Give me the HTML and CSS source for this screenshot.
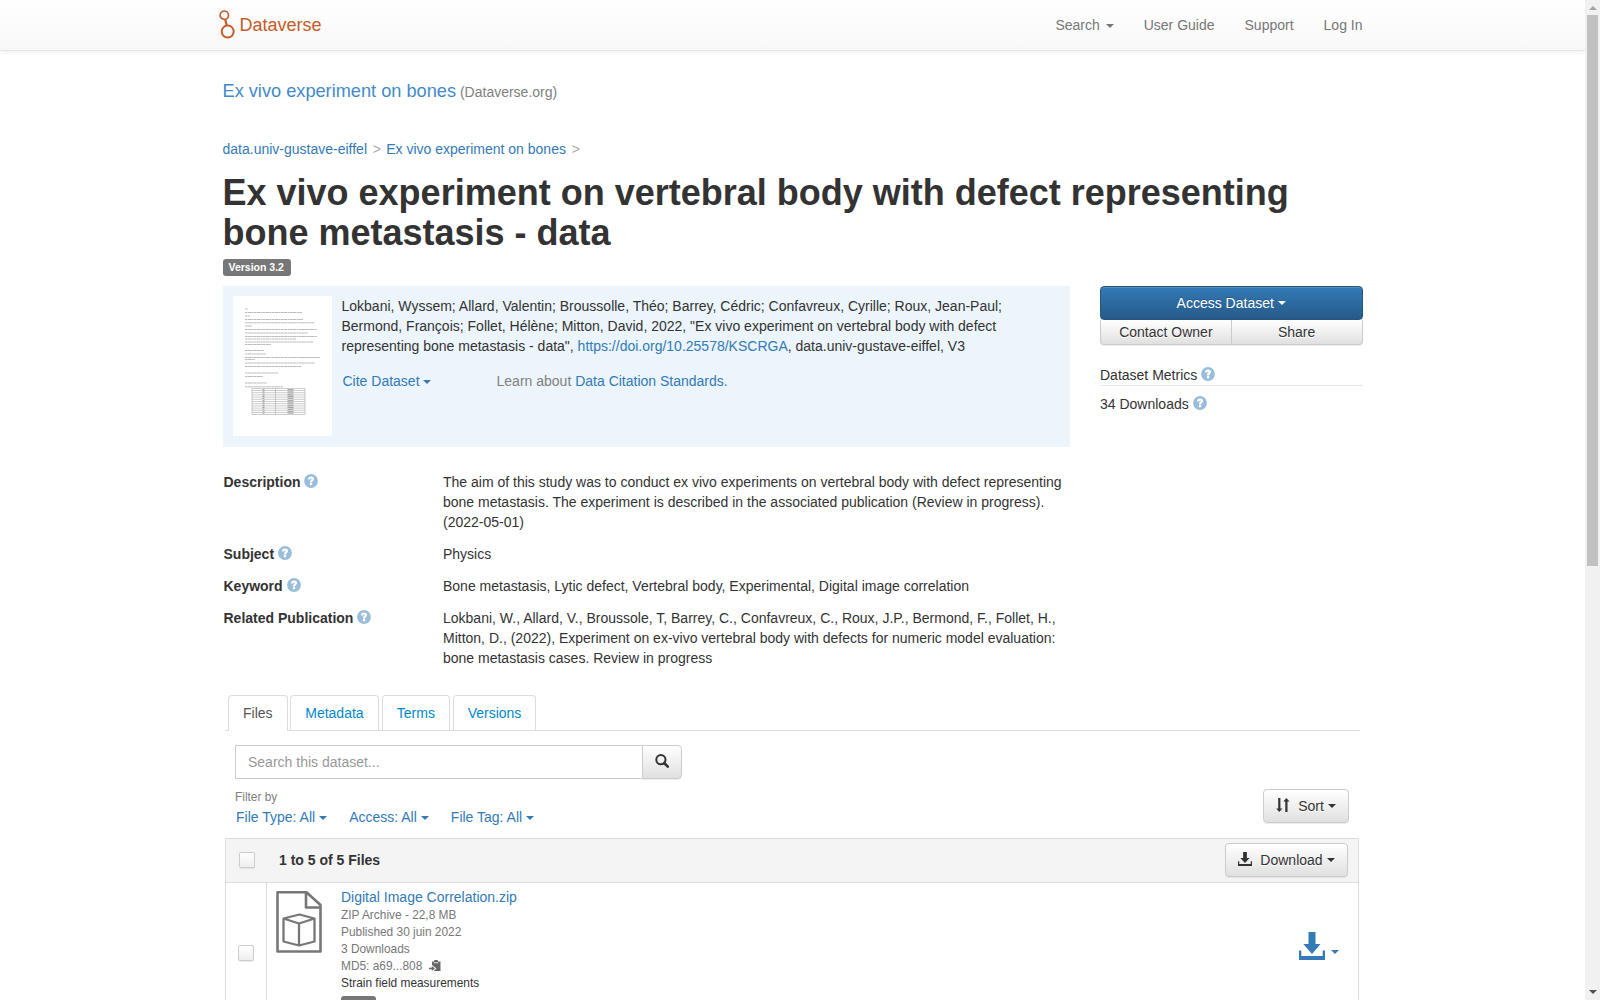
FILE: index.html
```html
<!DOCTYPE html>
<html lang="en">
<head>
<meta charset="utf-8">
<title>Ex vivo experiment on vertebral body - Dataverse</title>
<link rel="stylesheet" href="styles.css">
</head>
<body>
<svg class="defs" aria-hidden="true">
  <symbol id="help" viewBox="0 0 14 14"><circle cx="7" cy="7" r="6.9" fill="#99bddb"/><path d="M4 5.500C4 3.500 5.200 2.600 7.100 2.600s3 .9 3 2.500c0 1.800-1.900 1.900-1.900 3.300H5.900c0-2.200 1.700-2.300 1.700-3.300 0-.4-.2-.6-.6-.6s-.7.300-.7 1zM5.900 9.100h2.300v2.200H5.900z" fill="#fff"/></symbol>
  <symbol id="save" viewBox="0 0 26 28"><path d="M9.500 0h7v12h5L13 22 4.300 12h5.200zM0 18.500h2.300V24h21.400v-5.500H26V28H0z" fill="currentColor"/></symbol>
</svg>
<div class="page">
  <header class="navbar">
    <div class="container nav-inner">
      <a class="brand"><svg width="16" height="30" viewBox="0 0 16 30"><g fill="none" stroke="#c55b28"><circle cx="5.300" cy="5.200" r="4.200" stroke-width="1.700"/><circle cx="8.700" cy="21.600" r="6" stroke-width="2"/><path d="M6.200 9.200l1.500 6.500" stroke-width="2.200"/></g></svg><span>Dataverse</span></a>
      <nav class="nav-links"><a>Search <i class="caret"></i></a><a>User Guide</a><a>Support</a><a>Log In</a></nav>
    </div>
  </header>
  <main class="container">
    <div class="dv-name"><a>Ex vivo experiment on bones</a> <span>(Dataverse.org)</span></div>
    <div class="crumbs"><a>data.univ-gustave-eiffel</a><span>&gt;</span><a>Ex vivo experiment on bones</a><span>&gt;</span></div>
    <h1>Ex vivo experiment on vertebral body with defect representing bone metastasis - data</h1>
    <div class="version"><span class="label">Version 3.2</span></div>
    <div class="top-row">
      <section class="citation">
        <svg class="thumb" width="99" height="140" viewBox="0 0 99 140">
          <rect width="99" height="140" fill="#fff"/>
          <g stroke="#bbb" stroke-width="1" stroke-dasharray="2.500 .3 4 .3 1.500 .3">
            <path d="M12 13h3M12 16.500h57M12 20h5M12 23.500h58M12 26.800h69M12 30h7M12 33.500h72M12 37h63M12 40.500h72M12 43h51M12 46h68M12 48.500h26"/>
            <path d="M12 54.500h19M12 58h21M12 61.500h75M12 63.500h10M12 67h70M12 70.500h56M12 77h33M12 80.500h18M12 87h22M12 90.800h38"/>
          </g>
          <g fill="none" stroke="#aaa" stroke-width=".6"><path d="M19 92.500h53v26H19zM42.500 92.500v26M19 94.500h53M19 96.700h53M19 98.900h53M19 101.100h53M19 103.300h53M19 105.500h53M19 107.700h53M19 109.900h53M19 112.100h53M19 114.300h53M19 116.500h53"/></g>
          <path d="M57.500 93v25" stroke="#777" stroke-width="6" stroke-dasharray="1.300 .9" opacity=".6"/>
          <path d="M30.500 93v25" stroke="#777" stroke-width="2" stroke-dasharray="1.300 .9" opacity=".6"/>
        </svg>
        <div class="cite-body">
          <p>Lokbani, Wyssem; Allard, Valentin; Broussolle, Théo; Barrey, Cédric; Confavreux, Cyrille; Roux, Jean-Paul;<br>Bermond, François; Follet, Hélène; Mitton, David, 2022, "Ex vivo experiment on vertebral body with defect<br>representing bone metastasis - data", <a>https://doi.org/10.25578/KSCRGA</a>, data.univ-gustave-eiffel, V3</p>
          <div class="cite-links"><a class="cite-drop">Cite Dataset<i class="caret"></i></a><span>Learn about <a>Data Citation Standards.</a></span></div>
        </div>
      </section>
      <aside class="side">
        <a class="btn primary">Access Dataset<i class="caret"></i></a>
        <div class="btn-pair"><a class="btn small left">Contact Owner</a><a class="btn small right">Share</a></div>
        <div class="metrics-title">Dataset Metrics <svg class="help"><use href="#help"/></svg></div>
        <div class="metrics">34 Downloads <svg class="help"><use href="#help"/></svg></div>
      </aside>
    </div>
    <dl class="meta">
      <dt>Description <svg class="help"><use href="#help"/></svg></dt><dd>The aim of this study was to conduct ex vivo experiments on vertebral body with defect representing<br>bone metastasis. The experiment is described in the associated publication (Review in progress).<br>(2022-05-01)</dd>
      <dt>Subject <svg class="help"><use href="#help"/></svg></dt><dd>Physics</dd>
      <dt>Keyword <svg class="help"><use href="#help"/></svg></dt><dd>Bone metastasis, Lytic defect, Vertebral body, Experimental, Digital image correlation</dd>
      <dt>Related Publication <svg class="help"><use href="#help"/></svg></dt><dd>Lokbani, W., Allard, V., Broussole, T, Barrey, C., Confavreux, C., Roux, J.P., Bermond, F., Follet, H.,<br>Mitton, D., (2022), Experiment on ex-vivo vertebral body with defects for numeric model evaluation:<br>bone metastasis cases. Review in progress</dd>
    </dl>
    <div class="tabs"><a class="tab active">Files</a><a class="tab">Metadata</a><a class="tab">Terms</a><a class="tab">Versions</a></div>
    <div class="search"><div class="search-input">Search this dataset...</div><a class="btn search-btn"><svg width="14" height="14" viewBox="0 0 14 14"><circle cx="5.900" cy="5.700" r="4.600" fill="none" stroke="#333" stroke-width="2"/><path d="M9.200 9l3.600 3.600" stroke="#333" stroke-width="2.600" stroke-linecap="round"/></svg></a></div>
    <div class="filter-row">
      <div class="filters"><div class="filter-title">Filter by</div><div class="filter-links"><a>File Type: All<i class="caret"></i></a><a>Access: All<i class="caret"></i></a><a>File Tag: All<i class="caret"></i></a></div></div>
      <a class="btn sort"><svg width="14" height="14" viewBox="0 0 14 14"><path d="M2.200 0h2.200v10.500h2L3.300 14 .2 10.500h2zM9.300 14h2.200V3.500h2L10.400 0 7.300 3.500h2z" fill="#333"/></svg><span>Sort</span><i class="caret"></i></a>
    </div>
    <div class="files">
      <div class="files-head"><i class="check"></i><strong>1 to 5 of 5 Files</strong><a class="btn dl"><svg width="14" height="14" viewBox="0 0 26 28" preserveAspectRatio="none"><use href="#save" width="26" height="28"/></svg><span>Download</span><i class="caret"></i></a></div>
      <div class="file-row">
        <div class="check-cell"><i class="check"></i></div>
        <svg class="file-icon" width="46" height="62" viewBox="0 0 46 62"><g fill="none" stroke="#777" stroke-width="2.600" stroke-linejoin="round"><path d="M1.500 1.300h29L44.500 14v46.500h-43zM30 1.500V16.500h14"/><path d="M7.500 27.500l16-4 15 4v23l-15.500 4-15.500-4zM7.500 27.500l15.500 5 15.500-5M23 32.500v22" stroke-width="2.300"/></g></svg>
        <div class="file-info">
          <a class="file-name">Digital Image Correlation.zip</a>
          <div>ZIP Archive - 22,8 MB</div><div>Published 30 juin 2022</div><div>3 Downloads</div>
          <div class="md5">MD5: a69...808 <svg width="12" height="12" viewBox="0 0 12 12"><path d="M3 1.500h2.200V0h3.600v1.500H11.500V11H4.500L7.500 8.500 3 5z" fill="#666"/><path d="M4.700 2.800h4.600" stroke="#fff" stroke-width=".8"/><path d="M0 7.700h2.800V6L6 8.500l-3.200 2.500V9.300H0z" fill="#666"/></svg></div>
          <div class="desc">Strain field measurements</div>
          <span class="label tag">Data</span>
        </div>
        <a class="row-dl"><svg width="26" height="28"><use href="#save"/></svg><i class="caret"></i></a>
      </div>
    </div>
  </main>
</div>
<div class="scrollbar"><i class="arrow up"></i><i class="thumb-bar"></i><i class="arrow down"></i></div>
</body>
</html>
```
FILE: styles.css
```css
* { box-sizing: border-box; }
body { margin: 0; height: 1000px; display: flex; overflow: hidden; background: #fff; color: #333; font: 14px/20px "Liberation Sans", Arial, sans-serif; }
a { color: #337ab7; text-decoration: none; }
p, dl, dd, h1 { margin: 0; }
svg { flex: none; }
.defs { position: absolute; width: 0; height: 0; }
.page { flex: 1; height: 1000px; overflow: hidden; }
.container { width: 1170px; margin: 0 auto; padding: 0 15px; }
.caret { display: inline-block; border: 4px solid transparent; border-top-color: currentColor; border-bottom: 0; vertical-align: middle; margin-left: 4px; }

.navbar { height: 51px; border-bottom: 1px solid #e7e7e7; background: linear-gradient(#fff, #f8f8f8); box-shadow: 0 1px 5px rgba(0,0,0,.075); }
.nav-inner { display: flex; justify-content: space-between; }
.brand { display: flex; margin-left: -4px; color: #c55b28; font-size: 18px; line-height: 20px; gap: 5px; }
.brand svg { margin-top: 10px; }
.brand span { margin-top: 15px; }
.nav-links { display: flex; gap: 30px; padding-top: 15px; }
.nav-links a { color: #777; }
.nav-links .caret { margin-left: 2px; }

.dv-name { margin-top: 29px; line-height: 22px; height: 22px; color: #808080; }
.dv-name a { font-size: 18.2px; color: #428bca; }
.crumbs { margin-top: 37px; display: flex; }
.crumbs span { color: #aaa; margin: 0 5.300px 0 5.700px; }
h1 { margin-top: 14px; font-size: 36px; line-height: 40px; }
.label { display: inline-block; background: #777; color: #fff; font-weight: bold; font-size: 10.5px; line-height: 17px; height: 17px; padding: 0 6px; border-radius: 3px; }
.version { height: 17px; margin-top: 6px; display: flex; }
.version .label { width: 68px; }
.top-row { margin-top: 10px; display: flex; gap: 30px; }
.citation { width: 847.500px; height: 161px; padding: 10px; background: #ecf5fb; display: flex; gap: 10px; }
.cite-links { display: flex; margin: 15px 0 0 1px; gap: 66px; color: #808080; }
.cite-links .caret { margin-left: 3px; }
.side { flex: 1; }
.btn { display: flex; align-items: center; justify-content: center; height: 34px; color: #333; border: 1px solid #ccc; border-radius: 4px; background: linear-gradient(#fff, #e0e0e0); text-shadow: 0 1px 0 #fff; box-shadow: inset 0 1px 0 rgba(255,255,255,.15), 0 1px 1px rgba(0,0,0,.075); }
.primary { color: #fff; border-color: #245580; background: linear-gradient(#337ab7, #265a88); text-shadow: 0 -1px 0 rgba(0,0,0,.2); }
.btn-pair { display: flex; }
.small { flex: 1; height: 25px; padding-bottom: 1px; border-top: 0; }
.left { border-radius: 0 0 0 4px; }
.right { border-radius: 0 0 4px 0; border-left: 0; }
.help { width: 14px; height: 14px; vertical-align: -1px; }
.metrics-title { margin-top: 20px; height: 21px; border-bottom: 1px solid #e7e7e7; line-height: 20px; }
.metrics { margin-top: 8px; }

.meta { display: grid; grid-template-columns: 219.500px 1fr; row-gap: 12px; padding: 25px 0 0 1px; }
dt { font-weight: bold; }

.tabs { display: flex; margin: 27px 2.500px 0; height: 36px; padding-left: 3px; border-bottom: 1px solid #ddd; }
.tab { height: 35px; padding: 7px 14px; margin-right: 2.700px; border: 1px solid #ddd; border-bottom: 0; border-radius: 4px 4px 0 0; color: #08c; }
.tab:nth-child(2) { margin-right: 3.200px; }
.tab.active { height: 36px; background: #fff; color: #555; }
.search { display: flex; width: 447px; margin: 14px 0 0 12.500px; }
.search-input { flex: 1; height: 34px; border: 1px solid #ccc; border-right: 0; padding: 6px 12px; color: #999; }
.search-btn { width: 40px; padding-bottom: 2px; border-radius: 0 4px 4px 0; }
.filter-row { display: flex; justify-content: space-between; margin: 10px 13.500px 0 12.500px; height: 49px; }
.filter-title { font-size: 11.9px; line-height: 17px; color: #808080; }
.filter-links { display: flex; gap: 22px; padding: 1px 0 0 1px; }
.sort { width: 86px; }
.sort svg, .dl svg { margin-bottom: 2px; }
.btn svg + span { margin-left: 8px; }
.files { margin: 0 3.500px 0 2.500px; border: 1px solid #ddd; height: 300px; }
.files-head { height: 44px; background: #f4f4f4; border-bottom: 1px solid #ddd; display: flex; align-items: center; padding: 0 10px 2px 13px; }
.files-head strong { flex: 1; margin-left: 23px; }
.check { display: block; width: 16px; height: 16px; border: 1px solid #ccc; border-radius: 2px; background: linear-gradient(#fff, #eee); box-shadow: 0 1px 1px rgba(0,0,0,.075); }
.files-head .check { margin-right: 1px; }
.dl { width: 123px; }
.file-row { display: flex; height: 254px; }
.check-cell { width: 41px; border-right: 1px solid #ddd; padding: 62px 0 0 12px; }
.file-icon { margin: 8px 0 0 9px; }
.file-info { margin: 4px 0 0 19px; flex: 1; font-size: 11.9px; line-height: 17px; color: #777; }
.file-name { display: block; font-size: 14px; line-height: 20px; }
.md5 svg { margin-left: 3px; vertical-align: -2px; }
.desc { color: #333; }
.tag { margin-top: 4px; }
.row-dl { display: flex; margin: 49px 19px 0 0; height: 28px; }
.row-dl .caret { margin: 18px 0 0 6px; height: 4px; }

.scrollbar { width: 15px; height: 1000px; background: #f1f1f1; display: flex; flex-direction: column; align-items: center; }
.arrow { width: 0; height: 4px; border: 4px solid transparent; }
.up { margin-top: 6px; border-top: 0; border-bottom-color: #a3a3a3; }
.thumb-bar { width: 11px; height: 551px; margin-top: 5px; background: #c1c1c1; }
.down { margin-top: 424px; border-bottom: 0; border-top-color: #505050; }
```
